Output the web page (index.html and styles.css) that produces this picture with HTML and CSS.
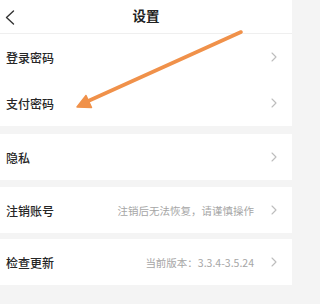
FILE: index.html
```html
<!DOCTYPE html>
<html lang="zh-CN">
<head>
<meta charset="utf-8">
<title>设置</title>
<link rel="stylesheet" href="styles.css">
</head>
<body>
<div class="page">
  <header class="topbar">
    <span class="back">
      <svg width="10" height="15" viewBox="0 0 10 15"><polyline points="8.5,1 1.5,7.5 8.5,14" fill="none" stroke="#333" stroke-width="1.4" stroke-linecap="round" stroke-linejoin="round"/></svg>
    </span>
    <h1 class="title">设置</h1>
    <span class="spacer"></span>
  </header>

  <section class="group g1">
    <div class="row"><span class="label">登录密码</span><span class="right"><svg class="chev" width="6" height="10" viewBox="0 0 6 10"><polyline points="1,1 5,5 1,9" fill="none" stroke="#bdbdbd" stroke-width="1.1" stroke-linecap="round" stroke-linejoin="round"/></svg></span></div>
    <div class="row"><span class="label">支付密码</span><span class="right"><svg class="chev" width="6" height="10" viewBox="0 0 6 10"><polyline points="1,1 5,5 1,9" fill="none" stroke="#bdbdbd" stroke-width="1.1" stroke-linecap="round" stroke-linejoin="round"/></svg></span></div>
  </section>

  <section class="group g2">
    <div class="row"><span class="label">隐私</span><span class="right"><svg class="chev" width="6" height="10" viewBox="0 0 6 10"><polyline points="1,1 5,5 1,9" fill="none" stroke="#bdbdbd" stroke-width="1.1" stroke-linecap="round" stroke-linejoin="round"/></svg></span></div>
  </section>

  <section class="group g3">
    <div class="row"><span class="label">注销账号</span><span class="right"><span class="hint">注销后无法恢复，请谨慎操作</span><svg class="chev" width="6" height="10" viewBox="0 0 6 10"><polyline points="1,1 5,5 1,9" fill="none" stroke="#bdbdbd" stroke-width="1.1" stroke-linecap="round" stroke-linejoin="round"/></svg></span></div>
  </section>

  <section class="group g4">
    <div class="row"><span class="label">检查更新</span><span class="right"><span class="hint">当前版本：3.3.4-3.5.24</span><svg class="chev" width="6" height="10" viewBox="0 0 6 10"><polyline points="1,1 5,5 1,9" fill="none" stroke="#bdbdbd" stroke-width="1.1" stroke-linecap="round" stroke-linejoin="round"/></svg></span></div>
  </section>

  <svg class="arrow" width="292" height="304" viewBox="0 0 292 304">
    <line x1="241" y1="32" x2="86" y2="102" stroke="#f0914a" stroke-width="3.6" stroke-linecap="round"/>
    <polygon points="77,107 91.5,107.5 86,95.5" fill="#f0914a" stroke="#f0914a" stroke-width="1.5" stroke-linejoin="round"/>
  </svg>
</div>
</body>
</html>
```

FILE: styles.css
```css
* { box-sizing: border-box; }
html, body { margin: 0; padding: 0; }
body {
  background: #f4f4f4;
  font-family: "Noto Sans CJK SC", "Noto Sans", sans-serif;
  color: #2b2b2b;
}
.page {
  position: relative;
  width: 292px;
  height: 304px;
  overflow: hidden;
  display: flex;
  flex-direction: column;
}
.topbar {
  height: 34px;
  background: #fff;
  border-bottom: 1px solid #efefef;
  display: grid;
  grid-template-columns: 40px 1fr 40px;
  align-items: center;
}
.back {
  display: flex;
  align-items: center;
  padding-left: 5px;
  padding-top: 1px;
}
.title {
  margin: 0;
  text-align: center;
  font-size: 13.5px;
  font-weight: 700;
  color: #222;
  line-height: 1;
  padding-bottom: 1px;
}
.group { background: #fff; }
.g1 { margin-bottom: 8px; }
.g2 { margin-bottom: 7px; }
.g3 { margin-bottom: 6px; }
.row {
  height: 46px;
  display: flex;
  align-items: center;
  justify-content: space-between;
  padding: 0 15px 0 6px;
}
.label {
  font-size: 12px;
  font-weight: 500;
  color: #262626;
}
.right {
  display: flex;
  align-items: center;
  gap: 17px;
}
.hint {
  font-size: 10.5px;
  color: #a6a6a6;
}
.chev { display: block; }
.arrow {
  position: absolute;
  left: 0;
  top: 0;
  pointer-events: none;
}
```
